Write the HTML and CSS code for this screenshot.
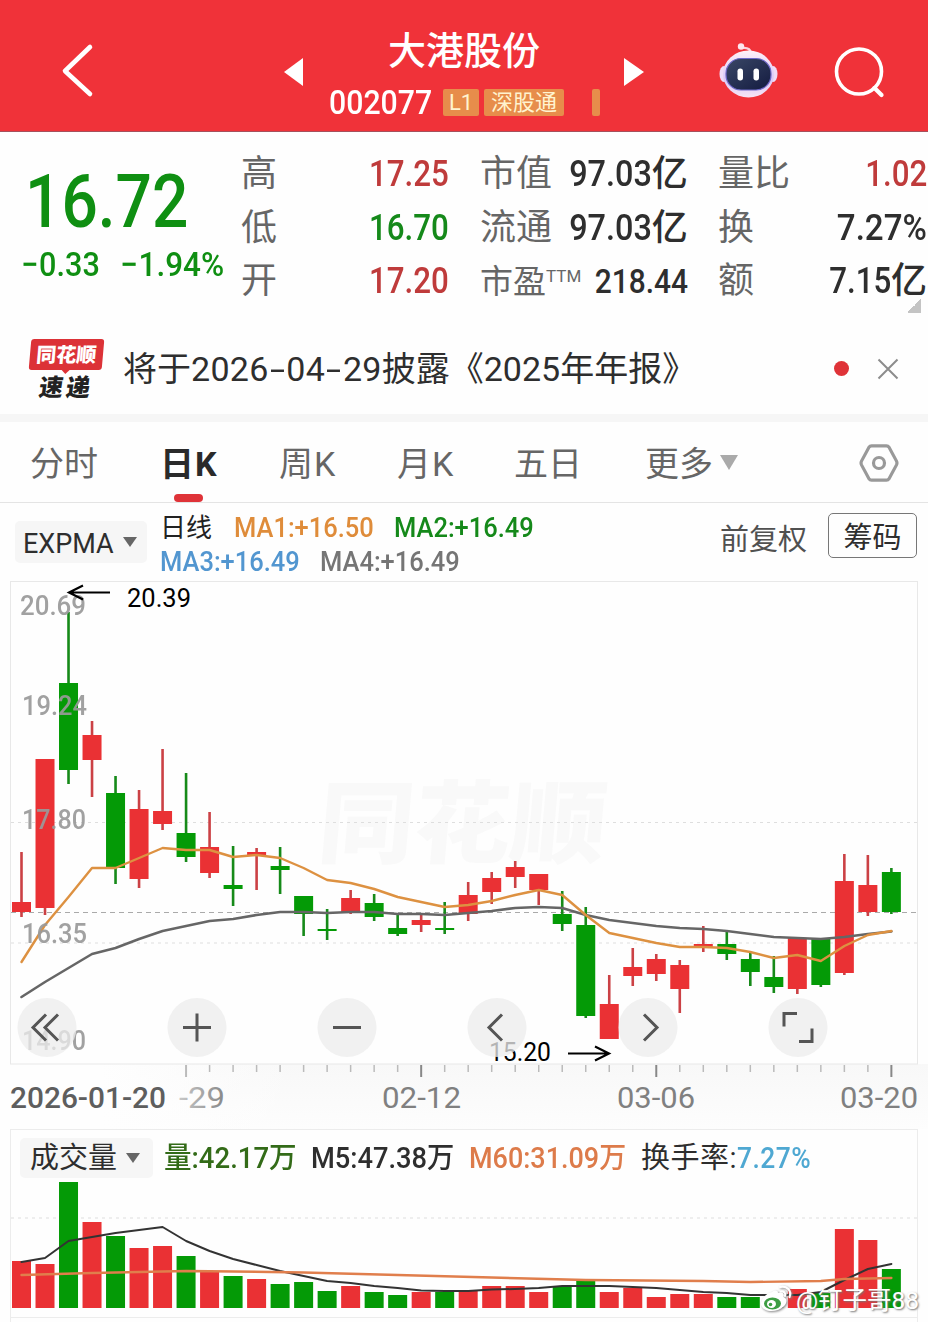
FILE: index.html
```html
<!DOCTYPE html>
<html lang="zh-CN">
<head>
<meta charset="utf-8">
<title>大港股份 002077</title>
<link rel="stylesheet" href="styles.css">
</head>
<body>
<header class="topbar">
  <svg class="back" viewBox="0 0 40 60" width="40" height="60"><path d="M34 7 9 31l25 23" fill="none" stroke="#fff" stroke-width="4.6" stroke-linecap="round" stroke-linejoin="round"/></svg>
  <svg class="prev" viewBox="0 0 20 30" width="20" height="30"><path d="M19 1v28L0 15z" fill="#fff"/></svg>
  <div class="title">
    <h1>大港股份</h1>
    <div class="code-row"><span class="code">002077</span><span class="tag tag-l1">L1</span><span class="tag tag-sz">深股通</span><span class="tag tag-cut"></span></div>
  </div>
  <svg class="next" viewBox="0 0 20 30" width="20" height="30"><path d="M0 1v28l20-14z" fill="#fff"/></svg>
  <svg class="robot" viewBox="0 0 60 58" width="60" height="58">
    <defs><linearGradient id="shell" x1="0" y1="0" x2="0" y2="1"><stop offset="0" stop-color="#fff0f7"/><stop offset=".6" stop-color="#d9c8f8"/><stop offset="1" stop-color="#f7e4f4"/></linearGradient>
    <linearGradient id="visor" x1="0" y1="0" x2="1" y2="1"><stop offset="0" stop-color="#3a4766"/><stop offset="1" stop-color="#131b40"/></linearGradient></defs>
    <path d="M32 12q-1-6-9-5" fill="none" stroke="#fbd3de" stroke-width="2.4"/><circle cx="22" cy="5.500" r="3.200" fill="#fde6ee"/>
    <ellipse cx="5" cy="33" rx="4.500" ry="8" fill="#efdcf7"/><ellipse cx="54" cy="33" rx="4.500" ry="8" fill="#efdcf7"/>
    <ellipse cx="29.500" cy="33" rx="25.500" ry="23.500" fill="url(#shell)"/>
    <rect x="7" y="17.500" width="45" height="31.500" rx="15" fill="url(#visor)" stroke="#6e68c8" stroke-width="1.200"/>
    <rect x="18.500" y="27.500" width="5.500" height="12" rx="2.700" fill="#fff"/><rect x="34.500" y="27.500" width="5.500" height="12" rx="2.700" fill="#fff"/>
  </svg>
  <svg class="search" viewBox="0 0 54 54" width="54" height="54"><circle cx="26" cy="26.500" r="22.500" fill="none" stroke="#fff" stroke-width="3.600"/><path d="m41.500 43 7 7" stroke="#fff" stroke-width="4.200" stroke-linecap="round"/></svg>
</header>

<section class="quote">
  <div class="price-block">
    <div class="price"><span class="n">16.72</span></div>
    <div class="change"><span class="n diff"><i>−</i>0.33</span><span class="n pct"><i>−</i>1.94%</span></div>
  </div>
  <dl class="stats s1">
    <dt>高</dt><dd class="up"><span class="n">17.25</span></dd>
    <dt>低</dt><dd class="down"><span class="n">16.70</span></dd>
    <dt>开</dt><dd class="up"><span class="n">17.20</span></dd>
  </dl>
  <dl class="stats s2">
    <dt>市值</dt><dd><span class="n">97.03</span>亿</dd>
    <dt>流通</dt><dd><span class="n">97.03</span>亿</dd>
    <dt class="pe">市盈<sup>TTM</sup></dt><dd class="pev"><span class="n">218.44</span></dd>
  </dl>
  <dl class="stats s3">
    <dt>量比</dt><dd class="up"><span class="n">1.02</span></dd>
    <dt>换</dt><dd><span class="n wide">7.27%</span></dd>
    <dt>额</dt><dd><span class="n">7.15</span>亿</dd>
  </dl>
  <span class="corner"></span>
</section>

<section class="news">
  <div class="brand"><div class="brand-top">同花顺</div><div class="brand-bottom">速递</div></div>
  <p>将于<span class="d">2026<i>-</i>04<i>-</i>29</span>披露《2025年年报》</p>
  <span class="dot"></span>
  <svg class="close" viewBox="0 0 22 22" width="22" height="22"><path d="m1.500 1.500 19 19m0-19-19 19" stroke="#8c8c8c" stroke-width="2"/></svg>
</section>

<nav class="tabs">
  <a class="t1">分时</a><a class="t2 active">日K</a><a class="t3">周K</a><a class="t4">月K</a><a class="t5">五日</a><a class="t6">更多<i class="caret"></i></a>
  <svg class="gear" viewBox="0 0 40 38" width="40" height="38"><path d="M12.500 1.800h15q1.600 0 2.400 1.300l7.600 14q.9 1.900 0 3.800l-7.600 14q-.8 1.300-2.400 1.300h-15q-1.600 0-2.400-1.300l-7.600-14q-.9-1.900 0-3.800l7.600-14q.8-1.300 2.400-1.300z" fill="none" stroke="#999" stroke-width="3.200"/><circle cx="20" cy="19" r="5.500" fill="none" stroke="#999" stroke-width="3.200"/></svg>
</nav>

<section class="indicator">
  <div class="picker"><span>EXPMA</span><i class="caret"></i></div>
  <div class="legend">
    <div><span class="black">日线</span><span class="ma ma1"><b>MA1:+16.50</b></span><span class="ma ma2"><b>MA2:+16.49</b></span></div>
    <div><span class="ma ma3"><b>MA3:+16.49</b></span><span class="ma ma4"><b>MA4:+16.49</b></span></div>
  </div>
  <span class="adjust">前复权</span><span class="chips">筹码</span>
</section>

<svg id="price-chart" viewBox="0 581 928 548" width="928" height="548"></svg>

<section class="volume">
  <div class="vol-head">
    <div class="picker"><span>成交量</span><i class="caret"></i></div>
    <span class="v v1"><b>量:42.17万</b></span><span class="v v2"><b>M5:47.38万</b></span><span class="v v3"><b>M60:31.09万</b></span><span class="v v4">换手率:<b>7.27%</b></span>
  </div>
  <svg id="volume-chart" viewBox="11 1180 906 137" width="906" height="137"></svg>
  <div class="credit">
    <svg viewBox="0 0 34 30" width="34" height="30"><path d="M13 8c3-2 6-2 6 1 4-1.500 7 0 5.500 4 4 1.500 4 6 0 9.500C18 29 4 28.500 2 21 1 16 7 9 13 8z" fill="#fff"/><ellipse cx="13.500" cy="19.500" rx="8.500" ry="6" fill="#3d9d43"/><ellipse cx="12.500" cy="20" rx="4.500" ry="4" fill="#fff"/><circle cx="11.500" cy="20.500" r="1.800" fill="#3d9d43"/><path d="M21 3c7-2 12 4 9.500 10M22 7.500c3-.5 5 1.500 4 4.500" fill="none" stroke="#fff" stroke-width="2.200" stroke-linecap="round"/></svg>
    <span>@钉子哥88</span>
  </div>
</section>
<div class="next-panel"></div>
<script src="chart.js"></script>
</body>
</html>
```

FILE: styles.css
```css
* { box-sizing: border-box; }
body { margin: 0; width: 928px; height: 1322px; overflow: hidden; background: #fefefe; color: #2e2e2e; font-family: Roboto, "Noto Sans CJK SC", sans-serif; }
svg { display: block; flex: none; }
i { font-style: normal; }
b { font-weight: inherit; }
.n { display: inline-block; font-weight: 500; transform: scaleX(.87); transform-origin: right center; white-space: nowrap; }

.topbar { display: flex; height: 132px; background: #f03239; border-bottom: 1px solid #a6505c; color: #fff; }
.back { margin: 40px 0 0 56px; }
.prev { margin: 57px 0 0 188px; }
.title { width: 316px; margin-left: 4px; }
.title h1 { margin: 21px 0 0 80px; font: 500 38px/54px "Noto Sans CJK SC", sans-serif; white-space: nowrap; }
.code-row { display: flex; align-items: center; height: 54px; }
.code { width: 114px; margin-left: 21px; font-size: 34px; font-weight: 500; transform: scaleX(.89); transform-origin: left center; }
.tag { height: 27px; background: #e78d4b; border-radius: 2px; font-size: 22px; line-height: 27px; text-align: center; color: #fff3cf; }
.tag-l1 { width: 36px; }
.tag-sz { width: 80px; margin-left: 5px; }
.tag-cut { width: 8px; margin-left: 28px; }
.next { margin: 57px 0 0 0; }
.robot { margin: 41px 0 0 75px; }
.search { margin: 45px 0 0 54px; }

.quote { position: relative; display: flex; height: 192px; padding-top: 16px; }
.price-block { width: 241px; color: #0f8f12; }
.price { height: 106px; padding-left: 25px; font-size: 74px; line-height: 108px; }
.price .n { transform: scaleX(.865); }
.price .n, .change .n { transform-origin: left center; }
.change { display: flex; font-size: 34px; line-height: 44px; margin-top: -12px; padding-left: 21px; }
.change i { display: inline-block; margin-right: 1px; }
.change .diff { width: 99px; transform: scaleX(.9); }
.change .pct { transform: scaleX(.925); }
.stats { display: grid; grid-template-rows: repeat(3, 53.5px); margin: 0; font-size: 36px; line-height: 53.5px; white-space: nowrap; }
.stats dt { color: #666; }
.stats dd { margin: 0; text-align: right; font-weight: 500; }
.s1 { width: 208px; grid-template-columns: 60px 148px; }
.s2 { width: 207px; margin-left: 31px; grid-template-columns: 80px 127px; }
.s3 { width: 209px; margin-left: 31px; grid-template-columns: 80px 129px; }
.s2 .n { transform: scaleX(.9); }
.stats .wide { transform: scaleX(.92); }
.stats .up { color: #bf3b3b; }
.stats .down { color: #15891a; }
.pe { font-size: 33px; }
.pe sup { display: inline-block; font-size: 17px; line-height: 1; vertical-align: 11px; }
.stats .pev { font-size: 34px; }
.stats .pev .n { transform: translateX(1px) scaleX(.88); }
.corner { position: absolute; right: 7px; top: 167px; width: 14px; height: 14px; background: linear-gradient(135deg, transparent 50%, #c4c4c4 50%); }

.news { display: flex; align-items: center; height: 98px; padding: 0 0 1px 30px; border-bottom: 8px solid #f6f6f6; }
.brand { width: 73px; height: 62px; margin-top: 2px; font-family: "Noto Sans CJK SC", sans-serif; font-weight: 900; text-align: center; white-space: nowrap; }
.brand-top { position: relative; height: 31px; color: #fff; font-size: 20px; line-height: 30px; background: #dc3237; border-radius: 3px; transform: skewX(-5deg); }
.brand-top::after { content: ""; position: absolute; left: 32px; top: 30px; border: solid transparent; border-width: 5px 5px 0; border-top-color: #dc3237; }
.brand-bottom { font-size: 24px; line-height: 31px; transform: skewX(-8deg); letter-spacing: 3px; color: #222; }
.news p { width: 711px; margin: 1px 0 0 20px; font-size: 34px; line-height: 50px; white-space: nowrap; }
.d { letter-spacing: .3px; }
.news i { display: inline-block; transform: scaleX(1.6); padding: 0 4px; }
.dot { width: 15px; height: 15px; border-radius: 50%; background: #df3338; }
.close { margin-left: 28px; }

.tabs { display: flex; height: 81px; border-bottom: 1px solid #e4e4e4; color: #666; font-size: 34px; line-height: 84px; white-space: nowrap; }
.t1 { margin-left: 30px; width: 130px; }
.t2 { width: 119px; }
.t3 { width: 118px; }
.t4 { width: 117px; }
.t5 { width: 131px; }
.t6 { width: 214px; }
.t2, .t3, .t4 { letter-spacing: 1px; }
.active { position: relative; color: #2a2a2a; font-weight: 700; }
.active::after { content: ""; position: absolute; left: 14px; bottom: 0; width: 29px; height: 8px; border-radius: 4px; background: #df3338; }
.caret { display: inline-block; width: 0; border: solid transparent; border-width: 15px 9px 0; border-top-color: #aaa; vertical-align: 6px; margin-left: 7px; }
.gear { margin-top: 22px; }

.indicator { display: flex; height: 78px; }
.indicator > * { flex: none; }
.picker { display: flex; align-items: center; background: #f6f6f6; border-radius: 5px; }
.picker .caret { border-width: 10px 7px 0; border-top-color: #666; }
.indicator .picker { width: 132px; height: 42px; margin: 18px 0 0 15px; padding: 3px 0 0 8px; font-size: 27px; }
.indicator .picker .caret { margin: -3px 0 0 9px; }
.legend { width: 574px; padding: 8px 0 0 13px; font-size: 26px; line-height: 34px; }
.legend div { display: flex; height: 34px; }
.black { width: 74px; color: #222; }
.ma { width: 160px; font-size: 28px; font-weight: 500; }
.ma b { display: inline-block; transform: scaleX(.91); transform-origin: left center; }
.ma1 { color: #df8c3a; }
.ma2 { color: #15891a; }
.ma3 { color: #5296d0; }
.ma4 { color: #757575; }
.adjust { width: 108px; padding-top: 16px; font-size: 29px; line-height: 42px; color: #505050; margin-left: -1px; }
.chips { width: 89px; height: 45px; margin-top: 10px; border: 1px solid #777; border-radius: 5px; font-size: 29px; line-height: 48px; text-align: center; }

.volume { position: relative; width: 908px; height: 189px; margin-left: 10px; border: 1px solid #ececec; }
.vol-head { display: flex; height: 50px; align-items: center; font-size: 29px; line-height: 40px; padding: 6px 0 0 9px; white-space: nowrap; }
.volume .picker { width: 133px; height: 40px; padding-left: 10px; line-height: 44px; }
.volume .picker .caret { margin-left: 9px; }
.v { line-height: 44px; }
.v b { display: inline-block; transform-origin: left center; font-weight: 500; }
.v1 { width: 147px; margin-left: 11px; color: #336b18; }
.v1 b { transform: scaleX(.95); }
.v2 { width: 158px; }
.v2 b { transform: scaleX(.94); }
.v3 { width: 172px; color: #dd7b4a; }
.v3 b { transform: scaleX(.93); }
.v4 { letter-spacing: .5px; }
.v4 b { color: #4fa8d2; transform: scaleX(.91); }
.credit { position: absolute; display: flex; left: 748px; top: 154px; color: #fff; font-size: 24.500px; line-height: 34px; white-space: nowrap; text-shadow: 1px 1px 2px #777; }
.credit svg { filter: drop-shadow(1px 1px 1px #888); }
.credit span { margin-left: 3px; }
.next-panel { width: 908px; height: 4px; margin-left: 10px; border-left: 1px solid #ececec; border-right: 1px solid #ececec; }
text { font-family: Roboto, "Noto Sans CJK SC", sans-serif; }
```

FILE: chart.js
```js
const RED = '#ea3134', GREEN = '#049a06';
const X = i => 21.5 + 23.51 * i;

// colour, high, body top, body bottom, low
const candles = [
  ['R',852,902,912,917],['R',759,759,908,915],['G',612,683,770,784],['R',721,735,760,797],['G',776,793,868,884],
  ['R',790,809,879,888],['R',749,811,824,830],['G',773,833,857,862],['R',812,847,873,878],['G',846,885,889,906],
  ['R',848,852,855,890],['G',847,866,870,894],['G',896,896,914,936],['G',909,929,931,940],['R',890,898,912,914],
  ['G',894,903,917,921],['G',914,928,934,936],['R',914,920,925,932],['G',902,928,930,934],['R',882,895,914,921],
  ['R',872,878,892,904],['R',861,867,877,888],['R',874,874,890,905],['G',891,914,924,931],['G',907,925,1016,1018],
  ['R',975,1004,1039,1039],['R',948,967,976,986],['R',954,959,974,981],['R',960,965,989,1013],['R',926,944,948,952],
  ['G',931,944,954,960],['G',953,959,972,986],['G',956,977,987,993],['R',938,938,989,994],['G',938,938,985,987],
  ['R',854,881,973,975],['R',855,885,912,916],['G',868,872,912,914]
];
const fast = [962,925,897,868,868,858,848,850,850,857,855,858,868,880,883,889,897,902,907,905,901,895,890,895,915,933,938,943,947,947,948,952,958,955,961,946,935,931];
const slow = [997,982,968,954,948,939,931,926,921,919,915,912,912,913,912,912,914,914,915,913,911,908,907,908,915,920,923,926,928,929,931,934,937,938,939,937,934,931.5];
const volumes = [1261,1264,1182,1222,1236,1248,1246,1256,1272,1276,1279,1284,1282,1291,1286,1292,1295,1292,1292,1290,1286,1286,1292,1286,1281,1292,1288,1297,1294,1294,1297,1297,1297,1289,1293,1229,1240,1269];
const m5 = [1262,1258,1241,1237,1233,1230,1227,1241,1251,1259,1265,1271,1276,1281,1283,1286,1288,1290.5,1291,1291,1289.5,1289,1288,1286,1286,1286,1287,1288,1290,1292,1293,1295,1295,1295,1292,1280,1269,1264];
const m60 = [[0,1275],[3,1273],[7,1271],[9,1271.5],[12,1272.5],[16,1275],[20,1277.5],[24,1280],[29,1281],[31,1282],[34,1281],[35,1279],[37,1278]];

const line = (pts, color, w) => `<polyline points="${pts.map(p => X(p[0]).toFixed(1) + ',' + p[1]).join(' ')}" fill="none" stroke="${color}" stroke-width="${w}" stroke-linejoin="round" stroke-linecap="round"/>`;
const indexed = a => a.map((y, i) => [i, y]);
const label = (s, x, y, w, size, color, extra = '') => `<text x="${x}" y="${y}" font-size="${size}" fill="${color}" textLength="${w}" lengthAdjust="spacingAndGlyphs" ${extra}>${s}</text>`;

let s = `<defs><linearGradient id="axis" x1="0" x2="0" y1="0" y2="1"><stop offset="0" stop-color="#f8f8f8"/><stop offset="1" stop-color="#fdfdfd"/></linearGradient>
<linearGradient id="wipe"><stop offset="0" stop-color="#fefefe"/><stop offset="1" stop-color="#fefefe" stop-opacity="0"/></linearGradient>
<linearGradient id="fade" gradientUnits="userSpaceOnUse" x1="175" x2="225" y1="0" y2="0"><stop offset="0" stop-color="#ccc"/><stop offset="1" stop-color="#888"/></linearGradient></defs>
<rect x="100" y="1064" width="828" height="65" fill="url(#axis)"/><rect x="100" y="1064" width="200" height="65" fill="url(#wipe)"/>
<rect x="10.5" y="581.5" width="907" height="482.500" fill="#fefefe" stroke="#e8e8e8"/>
<text x="318" y="856" font-size="90" font-weight="900" fill="#f9f9f9" textLength="288" lengthAdjust="spacingAndGlyphs" transform="translate(73 0) skewX(-5)">同花顺</text>
<path d="M11 822.5h906M11 943h906" stroke="#dedede" stroke-dasharray="3 4"/>
<path d="M11 912.5h906" stroke="#aaa" stroke-dasharray="5 4"/>`;
candles.forEach(([c, h, t, b, l], i) => {
  const f = c === 'R' ? RED : GREEN, x = X(i);
  s += `<rect x="${x - 1.3}" y="${h}" width="2.6" height="${l - h}" fill="${c === 'R' ? '#cb4145' : '#168a19'}"/><rect x="${x - 9.5}" y="${t}" width="19" height="${b - t}" fill="${f}"/>`;
});
s += line(indexed(slow), '#666', 2.6) + line(indexed(fast), '#dd9141', 2.4);
[['20.69',20,615,66],['19.24',22,715,65],['17.80',22,829,64],['16.35',22,943,65],['14.90',22,1050,64]].forEach(([v, x, y, w]) => { s += label(v, x, y, w, 28, '#9a9a9a', 'font-weight="500" opacity=".92"'); });
s += label('20.39', 127, 607, 64, 26, '#000') + label('15.20', 489, 1061, 62, 26, '#000');
s += `<path d="M110 592.5H69m14-7-14 7 14 7M568 1053.500h41m-14-7 14 7-14 7" fill="none" stroke="#000" stroke-width="2.200"/>`;
const icons = [
  [47, 'M-1-13-14 0-1 13M11-13-2 0 11 13'],
  [197, 'M-14 0h28M0-14v28'],
  [347, 'M-14 0h28'],
  [497, 'M5-13-8 0 5 13'],
  [648, 'M-4-13 9 0-4 13'],
  [798, 'M-14-1v-13H-1M14 1v13H1']
];
icons.forEach(([x, d]) => {
  s += `<circle cx="${x}" cy="1027.500" r="29.500" fill="#ececec" fill-opacity=".76"/><path d="${d}" transform="translate(${x} 1027.500)" fill="none" stroke="#555" stroke-width="3"/>`;
});
for (let i = 7; i < 38; i++) {
  const major = i % 10 === 7;
  s += `<path d="M${X(i)} 1065v${major ? 12 : 7}" stroke="${i === 7 ? '#bbb' : major ? '#888' : '#bbb'}" stroke-width="${major ? 2 : 1.5}"/>`;
}
s += label('2026-01-20', 10, 1108, 156, 29, '#5e5e5e', 'font-weight="500"')
  + label('-29', 179, 1108, 46, 29, 'url(#fade)')
  + label('02-12', 382, 1108, 79, 29, '#808080')
  + label('03-06', 617, 1108, 78, 29, '#808080')
  + label('03-20', 840, 1108, 78, 29, '#808080');
document.getElementById('price-chart').innerHTML = s;

let v = '<path d="M11 1218h906" stroke="#dedede" stroke-dasharray="3 4"/>';
volumes.forEach((y, i) => { v += `<rect x="${X(i) - 9.5}" y="${y}" width="19" height="${1308 - y}" fill="${candles[i][0] === 'R' ? RED : GREEN}"/>`; });
v += line(indexed(m5), '#333', 2) + line(m60, '#e07e4c', 2.4);
document.getElementById('volume-chart').innerHTML = v;
```
